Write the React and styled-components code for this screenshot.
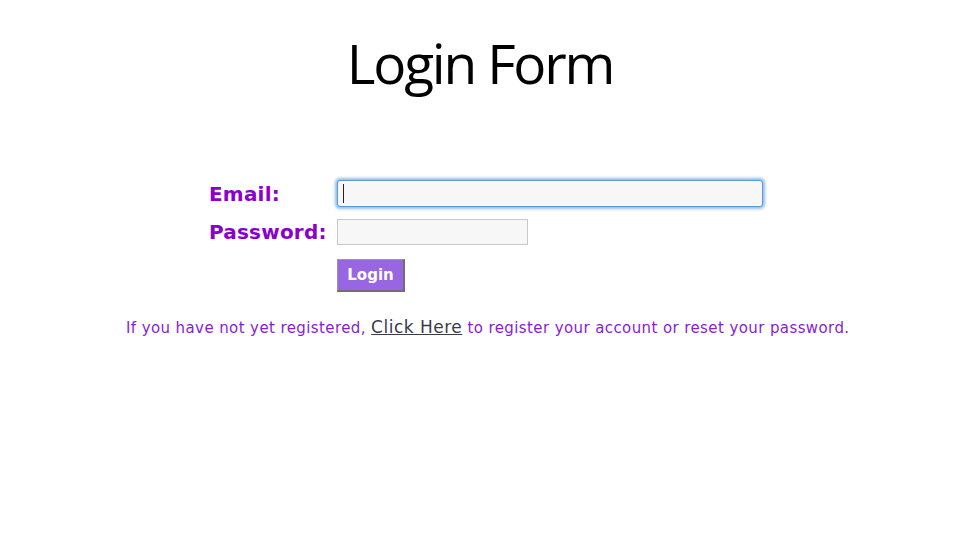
import styled, { createGlobalStyle } from 'styled-components'

const GlobalStyle = createGlobalStyle`
  html, body {
    margin: 0;
    padding: 0;
    background: #ffffff;
  }
`

const Page = styled.div`
  width: 960px;
  height: 540px;
  display: flex;
  flex-direction: column;
  background: #ffffff;
  overflow: hidden;
`

const Title = styled.h1`
  margin: 0;
  padding-top: 30px;
  text-align: center;
  font-family: "Open Sans", "Noto Sans", sans-serif;
  font-weight: 400;
  font-size: 55px;
  letter-spacing: -2.2px;
  line-height: 66px;
  color: #000;
`

const Form = styled.form`
  margin: 84px 0 0 209px;
  display: grid;
  grid-template-columns: 128px auto;
  row-gap: 12px;
  align-items: center;
`

const Label = styled.label`
  font-family: "DejaVu Sans", Verdana, sans-serif;
  font-weight: bold;
  font-size: 20px;
  letter-spacing: 0.2px;
  color: #8a00cc;
`

const Input = styled.input`
  box-sizing: border-box;
  width: ${p => p.$width}px;
  height: ${p => p.$height}px;
  margin: 0;
  padding: 0 4px;
  background: #f7f7f7;
  border: 1px solid ${p => (p.$focused ? '#5b9ad8' : '#c9c9c9')};
  border-radius: ${p => (p.$focused ? '3px' : '0')};
  box-shadow: ${p => (p.$focused ? '0 0 3px 2px #93bde9' : 'none')};
  font-family: "DejaVu Sans", sans-serif;
  font-size: 14px;
  outline: none;
`

const Caret = styled.span`
  position: absolute;
  left: 6px;
  top: 4px;
  width: 1px;
  height: 19px;
  background: #222;
`

const Field = styled.div`
  position: relative;
  width: fit-content;
`

const Button = styled.button`
  grid-column: 2;
  width: 68px;
  height: 33px;
  margin-top: 2px;
  background: #9966e3;
  border: 1px solid #9a9a9a;
  border-right: 2px solid #6f6f6f;
  border-bottom: 2px solid #6f6f6f;
  color: #ffffff;
  font-family: "DejaVu Sans", Verdana, sans-serif;
  font-weight: bold;
  font-size: 15px;
  padding: 0;
`

const Note = styled.p`
  margin: 25px 0 0;
  padding-left: 126px;
  font-family: "DejaVu Sans", Verdana, sans-serif;
  font-size: 15px;
  letter-spacing: 0.4px;
  color: #8a1dcf;
  white-space: nowrap;
`

const Link = styled.a`
  color: #3a3a4a;
  text-decoration: underline;
  font-size: 17px;
  letter-spacing: 0.5px;
`

export default function App() {
  return (
    <>
      <GlobalStyle />
      <Page>
        <Title>Login Form</Title>
        <Form onSubmit={e => e.preventDefault()}>
          <Label>Email:</Label>
          <Field>
            <Input $width={426} $height={27} $focused readOnly />
            <Caret />
          </Field>
          <Label>Password:</Label>
          <Input type="password" $width={191} $height={26} readOnly />
          <Button type="submit">Login</Button>
        </Form>
        <Note>
          If you have not yet registered, <Link href="#">Click Here</Link> to register your account or reset your password.
        </Note>
      </Page>
    </>
  )
}
